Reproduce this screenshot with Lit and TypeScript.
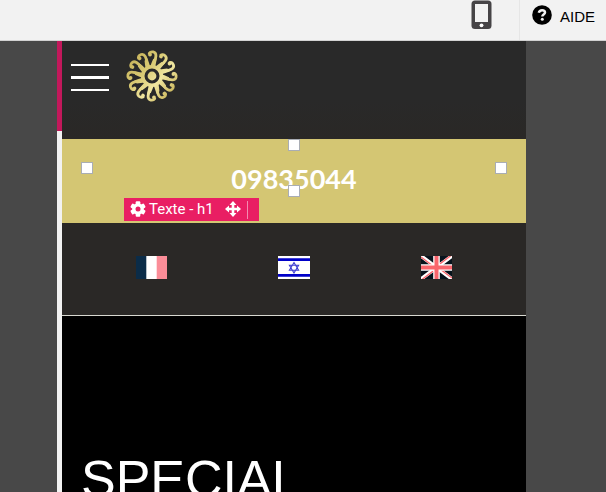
import { LitElement, html, svg, css } from "lit";
import { customElement } from "lit/decorators.js";

const ARMS = Array.from({ length: 12 }, (_, i) => i * 30 + 3);

@customElement("editor-topbar")
export class EditorTopbar extends LitElement {
  static styles = css`
    :host { display: block; }
    .bar {
      display: flex;
      justify-content: flex-end;
      box-sizing: border-box;
      height: 41px;
      background: #f2f2f2;
      border-bottom: 1px solid #d2d2d2;
    }
    button {
      display: flex;
      margin: 0;
      border: 0;
      background: none;
      font: 15px/20px "Liberation Sans", Arial, sans-serif;
      color: #000;
    }
    .device { padding: 0 27px 0 0; }
    .help {
      gap: 8px;
      padding: 5px 11px 0 12px;
      border-left: 1px solid #e6e6e6;
    }
    .help span { padding-top: 2px; }
    svg { display: block; }
  `;
  render() {
    return html`
      <header class="bar">
        <button class="device" aria-label="Mobile">
          <svg width="21" height="30" viewBox="0 0 21 30">
            <rect x="0.500" y="0.500" width="20" height="28.500" rx="3.500" fill="#464446" />
            <rect x="4" y="4" width="13" height="18" fill="#f2f2f2" />
            <circle cx="10.500" cy="25.300" r="1.900" fill="#fff" />
          </svg>
        </button>
        <button class="help">
          <svg width="20" height="20" viewBox="0 0 20 20">
            <circle cx="10" cy="10" r="9.800" />
            <path d="M6.800 7.800C7.200 5.900 8.600 5.200 10.100 5.200c1.700 0 2.900 1 2.900 2.400 0 2-2.700 2-2.700 3.900" fill="none" stroke="#f2f2f2" stroke-width="2.500" />
            <circle cx="10.300" cy="14.300" r="1.500" fill="#f2f2f2" />
          </svg>
          <span>AIDE</span>
        </button>
      </header>
    `;
  }
}

@customElement("site-header")
export class SiteHeader extends LitElement {
  static styles = css`
    :host { display: block; }
    .head {
      display: flex;
      align-items: flex-start;
      gap: 17px;
      box-sizing: border-box;
      height: 98px;
      padding: 9px;
      background: linear-gradient(#292929 60%, #2a2826);
    }
    .menu {
      display: flex;
      flex-direction: column;
      justify-content: space-between;
      width: 38px;
      height: 27px;
      margin: 14px 0 0;
      padding: 0;
      border: 0;
      background: none;
    }
    .menu span { height: 2px; background: #fff; }
    .menu .mid { height: 3px; }
    .logo { display: block; }
  `;
  render() {
    return html`
      <div class="head">
        <button class="menu" aria-label="Menu">
          <span></span><span class="mid"></span><span></span>
        </button>
        <svg class="logo" width="52" height="52" viewBox="-26 -26 52 52" role="img" aria-label="Logo">
          <defs>
            <linearGradient id="gold" gradientUnits="userSpaceOnUse" x1="-20" y1="-18" x2="20" y2="18">
              <stop offset="0" stop-color="#c8b45c" />
              <stop offset="0.350" stop-color="#d9ca74" />
              <stop offset="0.650" stop-color="#f0e6a0" />
              <stop offset="1" stop-color="#cbb75c" />
            </linearGradient>
            <mask id="sun" maskUnits="userSpaceOnUse" x="-26" y="-26" width="52" height="52">
              ${ARMS.map(
                (a) => svg`<g transform="rotate(${a})">
                  <path d="M-2.600 -8.500L-1.200 -13L0.300 -17L3.800 -18C3.800 -15 3 -12 2.600 -8.500Z" fill="#fff" />
                  <path d="M1.300 -14C3.200 -18 4 -23.500 0 -24.100C-2.700 -24.400 -4.100 -23 -4 -21.500" fill="none" stroke="#fff" stroke-width="2.800" />
                  <circle cx="-3.100" cy="-21.300" r="1.900" fill="#fff" />
                </g>`
              )}
              <circle r="9.300" fill="none" stroke="#fff" stroke-width="3.600" />
              <circle r="4.400" fill="#fff" />
            </mask>
          </defs>
          <rect x="-26" y="-26" width="52" height="52" fill="url(#gold)" mask="url(#sun)" />
        </svg>
      </div>
    `;
  }
}

@customElement("phone-block")
export class PhoneBlock extends LitElement {
  static styles = css`
    :host { display: block; }
    .block {
      position: relative;
      box-sizing: border-box;
      height: 84px;
      padding-top: 24px;
      background: #d4c673;
    }
    h1 {
      margin: 0;
      font: bold 27px/32px Lato, sans-serif;
      text-align: center;
      color: #fff;
    }
    .handle {
      position: absolute;
      box-sizing: border-box;
      width: 12px;
      height: 12px;
      border: 1px solid #a9adb4;
      background: #fff;
    }
    .top { top: 0; left: calc(50% - 6px); }
    .bottom { top: 46px; left: calc(50% - 6px); }
    .left { top: 23px; left: 19px; }
    .right { top: 23px; right: 19px; }
    .tag {
      position: absolute;
      top: 59px;
      left: 62px;
      display: flex;
      align-items: center;
      box-sizing: border-box;
      width: 135px;
      height: 23px;
      padding: 0 6px;
      background: #e91e63;
      font: 15px/20px Roboto, sans-serif;
      color: #fff;
    }
    .tag button {
      display: block;
      margin: 0;
      padding: 0;
      border: 0;
      background: none;
    }
    .tag svg { display: block; }
    .label { flex: 1; padding: 0 0 2px 3px; white-space: nowrap; }
    .sep { width: 1px; height: 18px; margin: 0 5px 0 6px; background: #f28bb0; }
  `;
  render() {
    return html`
      <section class="block">
        <h1>09835044</h1>
        <span class="handle top"></span>
        <span class="handle right"></span>
        <span class="handle bottom"></span>
        <span class="handle left"></span>
        <div class="tag">
          <button aria-label="Options">
            <svg width="16" height="18" viewBox="-8 -8 16 18">
              <g fill="#fff">
                ${[0, 60, 120].map((a) => svg`<rect x="-2.300" y="-7.700" width="4.600" height="15.400" rx="1" transform="rotate(${a})" />`)}
                <circle r="5.800" />
              </g>
              <circle r="2.500" fill="#e91e63" />
            </svg>
          </button>
          <span class="label">Texte - h1</span>
          <button aria-label="Déplacer">
            <svg width="16" height="18" viewBox="-8 -8 16 18" fill="#fff">
              <path d="M-6 -1.300H6V1.300H-6ZM-1.300 -6H1.300V6H-1.300Z" />
              ${[0, 90, 180, 270].map((a) => svg`<path d="M0 -8L3.500 -4H-3.500Z" transform="rotate(${a})" />`)}
            </svg>
          </button>
          <span class="sep"></span>
        </div>
      </section>
    `;
  }
}

@customElement("language-row")
export class LanguageRow extends LitElement {
  static styles = css`
    :host { display: block; }
    .row {
      display: grid;
      grid-template-columns: repeat(3, 1fr);
      justify-items: center;
      box-sizing: border-box;
      height: 93px;
      padding: 33px 18px 0;
      background: #2a2826;
      border-bottom: 1px solid #d8d8d0;
    }
    a, svg { display: block; }
    a { height: 23px; }
  `;
  render() {
    return html`
      <nav class="row">
        <a href="#fr" aria-label="Français">
          <svg width="31" height="23" viewBox="0 0 31 23">
            <rect width="31" height="23" fill="#fff" />
            <rect width="10.300" height="23" fill="#0b2c48" />
            <rect x="20.700" width="10.300" height="23" fill="#fb8d98" />
          </svg>
        </a>
        <a href="#he" aria-label="עברית">
          <svg width="32" height="23" viewBox="0 0 32 23">
            <rect width="32" height="23" fill="#fff" />
            <path d="M0 2.300H32V5H0ZM0 18H32V20.800H0Z" fill="#0000c8" />
            <path d="M16 6.500L20.600 14.300H11.400ZM16 17L11.400 9.200H20.600Z" fill="none" stroke="#3c3cd0" stroke-width="1.100" />
          </svg>
        </a>
        <a href="#en" aria-label="English">
          <svg width="31" height="23" viewBox="0 0 31 23">
            <rect width="31" height="23" fill="#07131c" />
            <path d="M0 0L31 23M31 0L0 23" stroke="#fff" stroke-width="3.800" />
            <path d="M0 1L14 11.500M31 22L17 11.500M30 -0.500L15.500 10.500M1 23.500L15.500 12.500" stroke="#f9656c" stroke-width="1.400" />
            <path d="M15.500 0V23M0 11.500H31" stroke="#fff" stroke-width="6.600" />
            <path d="M15.500 0V23M0 11.500H31" stroke="#f9656c" stroke-width="4" />
          </svg>
        </a>
      </nav>
    `;
  }
}

@customElement("app-root")
export class AppRoot extends LitElement {
  static styles = css`
    :host {
      display: flex;
      flex-direction: column;
      height: 100vh;
      overflow: hidden;
      background: #484848;
    }
    .stage {
      flex: 1;
      min-height: 0;
      display: grid;
      grid-template-columns: 5px 1fr;
      margin: 0 80px 0 57px;
      overflow: hidden;
    }
    .rail { background: #f2f2f2; }
    .progress { height: 90px; background: #c2185b; }
    .page { min-width: 0; background: #000; }
    .hero {
      margin: 0;
      padding: 133px 19px 40px;
      font: 52px/60px "Liberation Sans", Arial, sans-serif;
      color: #fff;
    }
  `;
  render() {
    return html`
      <editor-topbar></editor-topbar>
      <main class="stage">
        <div class="rail"><div class="progress"></div></div>
        <div class="page">
          <site-header></site-header>
          <phone-block></phone-block>
          <language-row></language-row>
          <h2 class="hero">SPECIAL</h2>
        </div>
      </main>
    `;
  }
}
